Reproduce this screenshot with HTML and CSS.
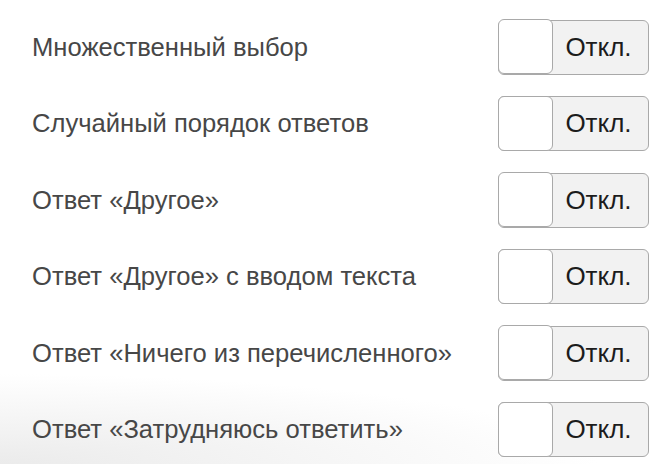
FILE: index.html
```html
<!DOCTYPE html>
<html lang="ru">
<head>
<meta charset="utf-8">
<link rel="stylesheet" href="styles.css">
</head>
<body>
<div class="settings">
  <div class="row"><span class="label">Множественный выбор</span><div class="toggle"><span class="knob"></span><span class="state">Откл.</span></div></div>
  <div class="row"><span class="label">Случайный порядок ответов</span><div class="toggle"><span class="knob"></span><span class="state">Откл.</span></div></div>
  <div class="row"><span class="label">Ответ «Другое»</span><div class="toggle"><span class="knob"></span><span class="state">Откл.</span></div></div>
  <div class="row"><span class="label">Ответ «Другое» с вводом текста</span><div class="toggle"><span class="knob"></span><span class="state">Откл.</span></div></div>
  <div class="row"><span class="label">Ответ «Ничего из перечисленного»</span><div class="toggle"><span class="knob"></span><span class="state">Откл.</span></div></div>
  <div class="row"><span class="label">Ответ «Затрудняюсь ответить»</span><div class="toggle"><span class="knob"></span><span class="state">Откл.</span></div></div>
</div>
</body>
</html>
```
FILE: styles.css
```css
html, body {
  margin: 0;
  height: 100%;
}
body {
  background: radial-gradient(ellipse 600px 90px at 0 100%, #ebebeb 0%, #ffffff 100%);
  font-family: "Liberation Sans", Arial, sans-serif;
  overflow: hidden;
}
.settings {
  padding: 9px 15px 0 32px;
}
.row {
  height: 76.5px;
  display: flex;
  align-items: center;
  justify-content: space-between;
}
.label {
  font-size: 25.6px;
  color: #474747;
}
.toggle {
  display: flex;
  box-sizing: border-box;
  width: 151px;
  height: 55px;
  border: 1.5px solid #a9a9a9;
  border-radius: 6px;
  background: #f2f2f2;
}
.knob {
  box-sizing: border-box;
  flex: none;
  width: 55px;
  height: 55px;
  margin: -1.5px;
  border: 1.5px solid #a9a9a9;
  border-radius: 6px;
  background: #ffffff;
}
.state {
  flex: 1;
  display: flex;
  align-items: center;
  justify-content: center;
  font-size: 26px;
  color: #1c1c1c;
  padding-right: 2px;
}
```
